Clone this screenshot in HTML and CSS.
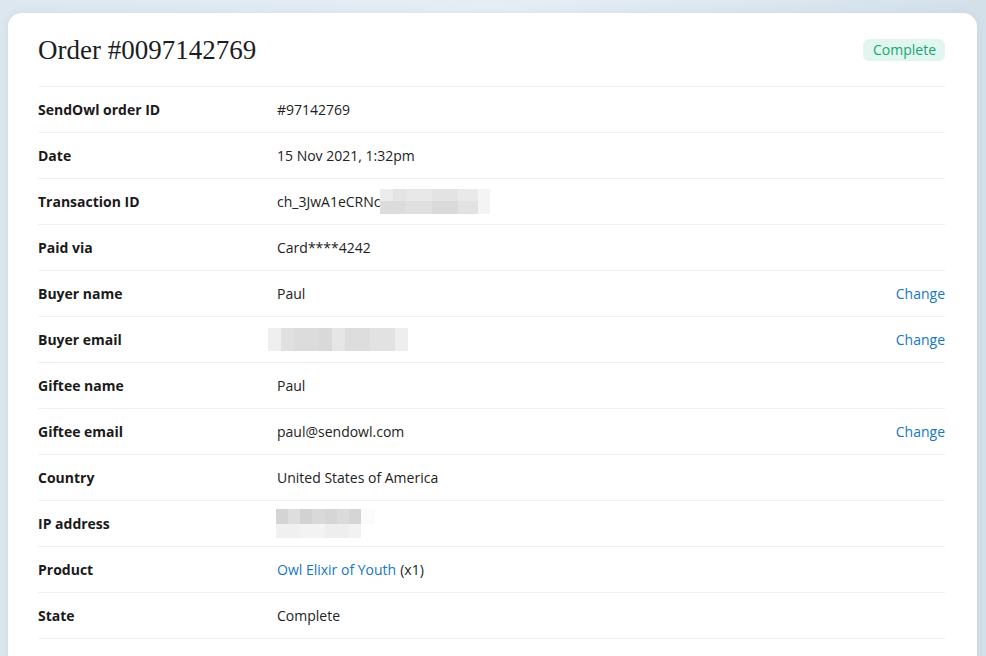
FILE: index.html
```html
<!DOCTYPE html>
<html lang="en">
<head>
    <meta charset="UTF-8">
    <meta name="viewport" content="width=device-width, initial-scale=1.0">
    <title>Order #0097142769</title>
    <link rel="stylesheet" href="styles.css">
</head>
<body>
    <div class="card">
        <div class="card-header">
            <h1>Order #0097142769</h1>
            <span class="badge">Complete</span>
        </div>

        <!-- Order details -->
        <div class="row">
            <div class="label">SendOwl order ID</div>
            <div class="value">#97142769</div>
        </div>
        <div class="row">
            <div class="label">Date</div>
            <div class="value">15 Nov 2021, 1:32pm</div>
        </div>
        <div class="row">
            <div class="label">Transaction ID</div>
            <div class="value">ch_3JwA1eCRNc<span class="blur blur-txn"></span></div>
        </div>
        <div class="row">
            <div class="label">Paid via</div>
            <div class="value">Card****4242</div>
        </div>
        <div class="row">
            <div class="label">Buyer name</div>
            <div class="value">Paul</div>
            <a class="action" href="#">Change</a>
        </div>
        <div class="row">
            <div class="label">Buyer email</div>
            <div class="value"><span class="blur blur-email"></span></div>
            <a class="action" href="#">Change</a>
        </div>
        <div class="row">
            <div class="label">Giftee name</div>
            <div class="value">Paul</div>
        </div>
        <div class="row">
            <div class="label">Giftee email</div>
            <div class="value">paul@sendowl.com</div>
            <a class="action" href="#">Change</a>
        </div>
        <div class="row">
            <div class="label">Country</div>
            <div class="value">United States of America</div>
        </div>
        <div class="row">
            <div class="label">IP address</div>
            <div class="value"><span class="blur blur-ip"></span></div>
        </div>
        <div class="row">
            <div class="label">Product</div>
            <div class="value"><a href="#">Owl Elixir of Youth</a> (x1)</div>
        </div>
        <div class="row">
            <div class="label">State</div>
            <div class="value">Complete</div>
        </div>
        <div class="row">
            <div class="label">Download link</div>
            <div class="value"><a href="#">https://transactions.sendowl.com/orders/97142769/download/b6f4a1d2c9e87f3a51dbk4c7</a></div>
        </div>
    </div>
</body>
</html>
```

FILE: styles.css
```css
body {
    margin: 0;
    padding: 13px 9px 0 8px;
    font-family: "Open Sans", Arial, sans-serif;
    font-size: 14px;
    color: #222;
    background: linear-gradient(90deg, #dce7ef 0%, #e6eef5 50%, #d3e0ea 100%);
    min-height: 656px;
    box-sizing: border-box;
}

.card {
    background-color: #fff;
    border-radius: 14px;
    padding: 23px 32px 40px 30px;
    box-shadow: 0 0 8px rgba(120, 150, 180, 0.12);
}

.card-header {
    display: flex;
    align-items: center;
    justify-content: space-between;
    height: 28px;
    margin-bottom: 22px;
}

h1 {
    margin: 0;
    font-family: "Liberation Serif", "Times New Roman", serif;
    font-weight: normal;
    font-size: 27px;
    color: #1d1d1d;
}

.badge {
    background-color: #e1f6ee;
    color: #17a673;
    border-radius: 6px;
    padding: 2px 9px 2px 10px;
    line-height: 18px;
}

.row {
    display: flex;
    align-items: center;
    height: 44px;
    padding-bottom: 1px;
    border-top: 1px solid #eef0f2;
}

.label {
    width: 239px;
    flex-shrink: 0;
    font-weight: bold;
    color: #1a1a1a;
}

.value {
    flex: 1;
    display: flex;
    align-items: center;
    white-space: nowrap;
}

a {
    color: #1677c5;
    text-decoration: none;
}

.value a {
    margin-right: 4px;
}

.action {
    margin-left: 16px;
}

/* pixelated blur boxes */
.blur {
    display: inline-block;
}

.blur-txn {
    width: 110px;
    height: 25px;
    background:
        linear-gradient(90deg, #ececec 0 13px, #e4e4e4 13px 26px, #e8e8e8 26px 52px, #e3e3e3 52px 78px, #e9e9e9 78px 98px, #f4f4f4 98px) top / 100% 12px no-repeat,
        linear-gradient(90deg, #dcdcdc 0 26px, #e0e0e0 26px 52px, #dadada 52px 78px, #e2e2e2 78px 98px, #f4f4f4 98px) bottom / 100% 13px no-repeat;
}

.blur-email {
    margin-left: -9px;
    width: 140px;
    height: 23px;
    background: linear-gradient(90deg, #efefef 0 13px, #e0e0e0 13px 26px, #dcdcdc 26px 51px, #d9d9d9 51px 64px, #e6e6e6 64px 77px, #dddddd 77px 102px, #e2e2e2 102px 127px, #eeeeee 127px);
}

.blur-ip {
    margin-left: -1px;
    width: 99px;
    height: 29px;
    background:
        linear-gradient(90deg, #d4d4d4 0 12px, #dedede 12px 24px, #d2d2d2 24px 36px, #d9d9d9 36px 49px, #d6d6d6 49px 61px, #dbdbdb 61px 73px, #d5d5d5 73px 85px, #fbfbfb 85px) top / 100% 15px no-repeat,
        linear-gradient(90deg, #f0f0f0 0 24px, #f3f3f3 24px 49px, #eeeeee 49px 73px, #f2f2f2 73px 85px, #fff 85px) bottom / 100% 14px no-repeat;
}
```
